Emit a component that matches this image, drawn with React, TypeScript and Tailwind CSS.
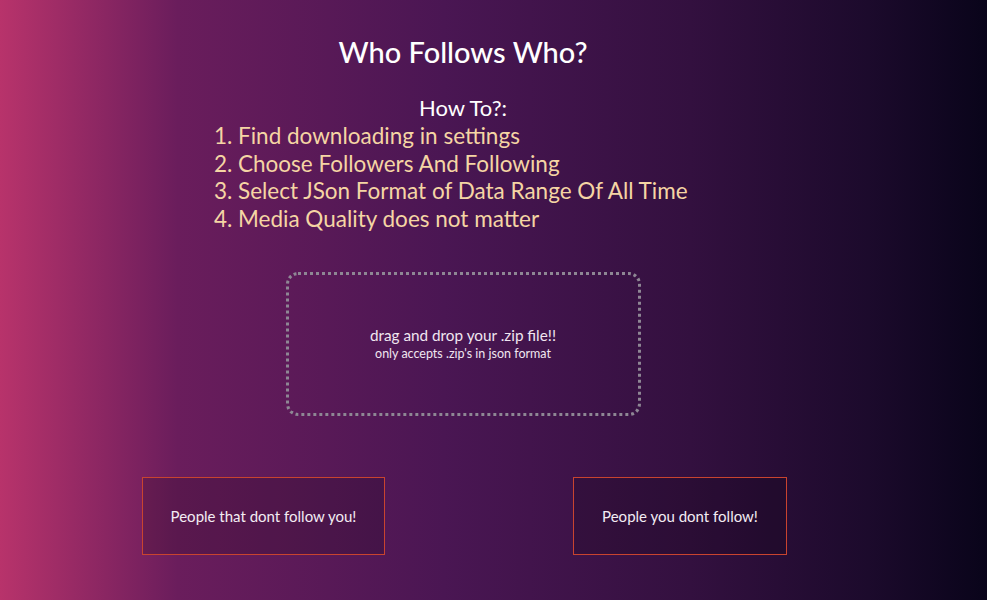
export default function App() {
  const steps = [
    'Find downloading in settings',
    'Choose Followers And Following',
    'Select JSon Format of Data Range Of All Time',
    'Media Quality does not matter',
  ];

  return (
    <div
      className="min-h-[600px] w-full bg-[linear-gradient(to_right,#b8336b_0%,#6a1d5c_18%,#4a1653_45%,#33103f_70%,#1c0a2c_88%,#09041a_100%)] text-white"
      style={{ fontFamily: 'Lato, "Noto Sans", sans-serif' }}
    >
      <div className="w-[926px] flex flex-col pt-[33px]">
        {/* Header */}
        <h1 className="text-center text-[29px] leading-[38px] font-medium">Who Follows Who?</h1>
        <h2 className="text-center text-[22px] leading-[28px] mt-[23px]">How To?:</h2>

        {/* Steps */}
        <ol className="list-decimal ml-[238px] text-[22.5px] leading-[27.5px] text-[#f5d5a4]">
          {steps.map((s, i) => (
            <li key={i}>{s}</li>
          ))}
        </ol>

        {/* Drop zone */}
        <div className="self-center mt-[40px] w-[355px] h-[144px] border-[3px] border-dotted border-[#8e8794] rounded-[12px] flex flex-col items-center justify-center">
          <p className="text-[15.3px] leading-[20px] text-[#f0e6f0]">drag and drop your .zip file!!</p>
          <p className="text-[12.5px] leading-[18px] text-[#f0e6f0]">only accepts .zip's in json format</p>
        </div>

        {/* Buttons */}
        <div className="flex ml-[142px] gap-[188px] mt-[61px]">
          <button className="w-[243px] h-[78px] border-[1.5px] border-[#c8442f] bg-black/15 text-[15px] text-[#f3ecf3]">
            People that dont follow you!
          </button>
          <button className="w-[214px] h-[78px] border-[1.5px] border-[#c8442f] bg-black/15 text-[15px] text-[#f3ecf3]">
            People you dont follow!
          </button>
        </div>
      </div>
    </div>
  );
}
